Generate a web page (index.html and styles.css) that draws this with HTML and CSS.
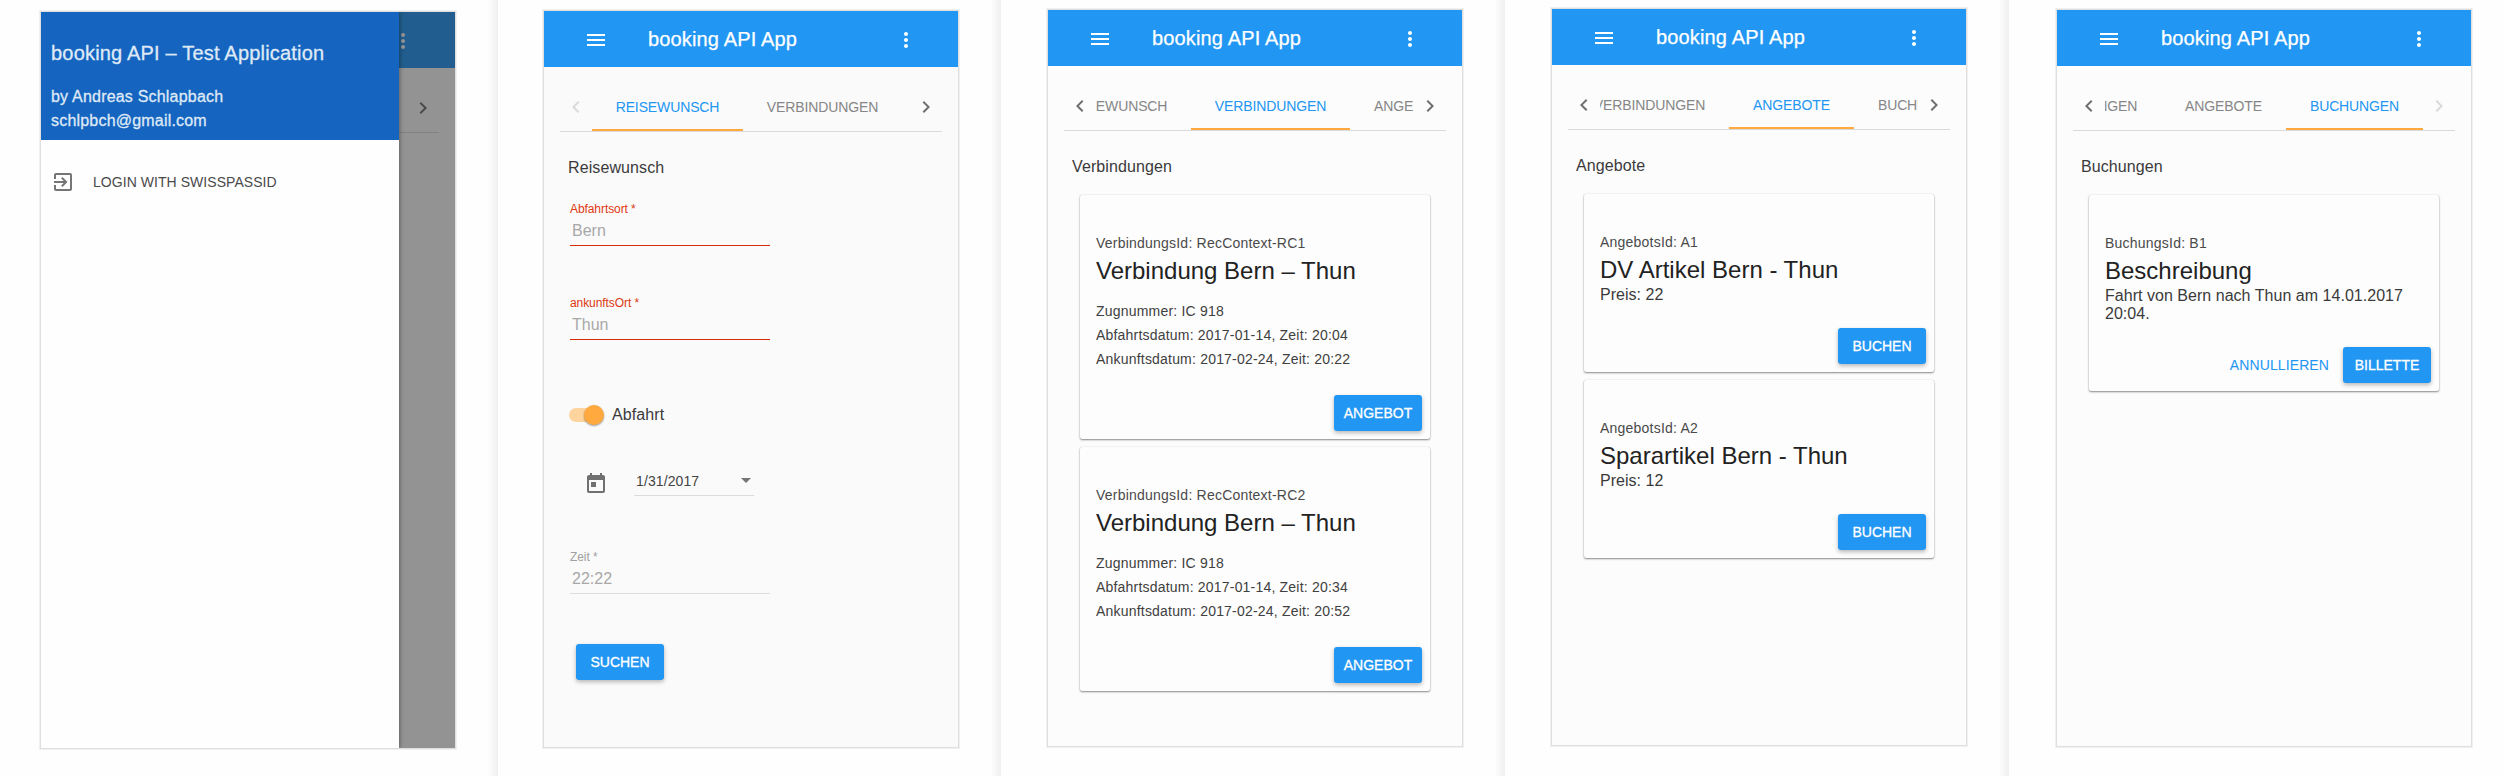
FILE: index.html
```
<!DOCTYPE html>
<html lang="de">
<head>
<meta charset="utf-8">
<title>booking API App</title>
<link rel="stylesheet" href="styles.css">
</head>
<body>
<svg class="defs" width="0" height="0" aria-hidden="true">
  <symbol id="menu" viewBox="0 0 24 24"><path d="M3 18h18v-2H3v2zm0-5h18v-2H3v2zm0-7v2h18V6H3z"/></symbol>
  <symbol id="more" viewBox="0 0 24 24"><path d="M12 8c1.1 0 2-.9 2-2s-.9-2-2-2-2 .9-2 2 .9 2 2 2zm0 2c-1.1 0-2 .9-2 2s.9 2 2 2 2-.9 2-2-.9-2-2-2zm0 6c-1.1 0-2 .9-2 2s.9 2 2 2 2-.9 2-2-.9-2-2-2z"/></symbol>
  <symbol id="prev" viewBox="0 0 24 24"><path d="M15.41 7.41L14 6l-6 6 6 6 1.41-1.41L10.83 12z"/></symbol>
  <symbol id="next" viewBox="0 0 24 24"><path d="M10 6L8.59 7.41 13.17 12l-4.58 4.59L10 18l6-6z"/></symbol>
  <symbol id="today" viewBox="0 0 24 24"><path d="M19 3h-1V1h-2v2H8V1H6v2H5c-1.11 0-1.99.9-1.99 2L3 19c0 1.1.89 2 2 2h14c1.1 0 2-.9 2-2V5c0-1.100-.9-2-2-2zm0 16H5V8h14v11zM7 10h5v5H7z"/></symbol>
  <symbol id="login" viewBox="0 0 24 24"><path d="M10.090 15.590L11.500 17l5-5-5-5-1.410 1.410L12.670 11H3v2h9.670l-2.580 2.590zM19 3H5c-1.110 0-2 .9-2 2v4h2V5h14v14H5v-4H3v4c0 1.100.890 2 2 2h14c1.100 0 2-.9 2-2V5c0-1.100-.9-2-2-2z"/></symbol>
</svg>
<main class="board">

  <section class="panel p1">
    <div class="phone">
      <header class="toolbar">
        <h1></h1>
        <svg class="icon"><use href="#more"/></svg>
      </header>
      <nav class="tabs">
        <div class="canvas"></div>
        <span class="arrow"><svg class="icon"><use href="#next"/></svg></span>
      </nav>
      <div class="backdrop"></div>
      <aside class="drawer">
        <div class="drawer-head">
          <h2>booking API – Test Application</h2>
          <p>by Andreas Schlapbach</p>
          <p>schlpbch@gmail.com</p>
        </div>
        <a class="login"><svg class="icon"><use href="#login"/></svg><span>LOGIN WITH SWISSPASSID</span></a>
      </aside>
    </div>
  </section>

  <section class="panel p2">
    <div class="phone">
      <header class="toolbar">
        <svg class="icon"><use href="#menu"/></svg>
        <h1>booking API App</h1>
        <svg class="icon"><use href="#more"/></svg>
      </header>
      <nav class="tabs">
        <span class="arrow off"><svg class="icon"><use href="#prev"/></svg></span>
        <div class="canvas"><div class="strip">
          <span class="tab t1 active">REISEWUNSCH</span><span class="tab t2">VERBINDUNGEN</span>
        </div></div>
        <span class="arrow"><svg class="icon"><use href="#next"/></svg></span>
      </nav>
      <h2 class="heading">Reisewunsch</h2>
      <form class="form">
        <label class="field invalid"><span>Abfahrtsort *</span><b>Bern</b></label>
        <label class="field invalid"><span>ankunftsOrt *</span><b>Thun</b></label>
        <div class="switch"><i class="track"><i class="thumb"></i></i><span>Abfahrt</span></div>
        <div class="date"><svg class="icon"><use href="#today"/></svg><div class="date-input"><span>1/31/2017</span><i class="caret"></i></div></div>
        <label class="field time"><span>Zeit *</span><b>22:22</b></label>
        <span class="btn">SUCHEN</span>
      </form>
    </div>
  </section>

  <section class="panel p3">
    <div class="phone">
      <header class="toolbar">
        <svg class="icon"><use href="#menu"/></svg>
        <h1>booking API App</h1>
        <svg class="icon"><use href="#more"/></svg>
      </header>
      <nav class="tabs">
        <span class="arrow"><svg class="icon"><use href="#prev"/></svg></span>
        <div class="canvas"><div class="strip">
          <span class="tab t1">REISEWUNSCH</span><span class="tab t2 active">VERBINDUNGEN</span><span class="tab t3">ANGEBOTE</span>
        </div></div>
        <span class="arrow"><svg class="icon"><use href="#next"/></svg></span>
      </nav>
      <h2 class="heading">Verbindungen</h2>
      <div class="cards">
        <article class="card">
          <p class="sub">VerbindungsId: RecContext-RC1</p>
          <h3>Verbindung Bern – Thun</h3>
          <div class="details"><p>Zugnummer: IC 918</p><p>Abfahrtsdatum: 2017-01-14, Zeit: 20:04</p><p>Ankunftsdatum: 2017-02-24, Zeit: 20:22</p></div>
          <div class="actions"><span class="btn">ANGEBOT</span></div>
        </article>
        <article class="card">
          <p class="sub">VerbindungsId: RecContext-RC2</p>
          <h3>Verbindung Bern – Thun</h3>
          <div class="details"><p>Zugnummer: IC 918</p><p>Abfahrtsdatum: 2017-01-14, Zeit: 20:34</p><p>Ankunftsdatum: 2017-02-24, Zeit: 20:52</p></div>
          <div class="actions"><span class="btn">ANGEBOT</span></div>
        </article>
      </div>
    </div>
  </section>

  <section class="panel p4">
    <div class="phone">
      <header class="toolbar">
        <svg class="icon"><use href="#menu"/></svg>
        <h1>booking API App</h1>
        <svg class="icon"><use href="#more"/></svg>
      </header>
      <nav class="tabs">
        <span class="arrow"><svg class="icon"><use href="#prev"/></svg></span>
        <div class="canvas"><div class="strip">
          <span class="tab t2">VERBINDUNGEN</span><span class="tab t3 active">ANGEBOTE</span><span class="tab t4">BUCHUNGEN</span>
        </div></div>
        <span class="arrow"><svg class="icon"><use href="#next"/></svg></span>
      </nav>
      <h2 class="heading">Angebote</h2>
      <div class="cards">
        <article class="card">
          <p class="sub">AngebotsId: A1</p>
          <h3>DV Artikel Bern - Thun</h3>
          <p class="text">Preis: 22</p>
          <div class="actions"><span class="btn">BUCHEN</span></div>
        </article>
        <article class="card">
          <p class="sub">AngebotsId: A2</p>
          <h3>Sparartikel Bern - Thun</h3>
          <p class="text">Preis: 12</p>
          <div class="actions"><span class="btn">BUCHEN</span></div>
        </article>
      </div>
    </div>
  </section>

  <section class="panel p5">
    <div class="phone">
      <header class="toolbar">
        <svg class="icon"><use href="#menu"/></svg>
        <h1>booking API App</h1>
        <svg class="icon"><use href="#more"/></svg>
      </header>
      <nav class="tabs">
        <span class="arrow"><svg class="icon"><use href="#prev"/></svg></span>
        <div class="canvas"><div class="strip">
          <span class="tab t2">VERBINDUNGEN</span><span class="tab t3">ANGEBOTE</span><span class="tab t4 active">BUCHUNGEN</span>
        </div></div>
        <span class="arrow off"><svg class="icon"><use href="#next"/></svg></span>
      </nav>
      <h2 class="heading">Buchungen</h2>
      <div class="cards">
        <article class="card">
          <p class="sub">BuchungsId: B1</p>
          <h3>Beschreibung</h3>
          <p class="text">Fahrt von Bern nach Thun am 14.01.2017 20:04.</p>
          <div class="actions"><span class="btn flat">ANNULLIEREN</span><span class="btn">BILLETTE</span></div>
        </article>
      </div>
    </div>
  </section>

</main>
</body>
</html>
```
FILE: styles.css
```
* { box-sizing: border-box; margin: 0; padding: 0; }
body {
  width: 2504px; height: 776px; overflow: hidden; background: #fefefe;
  font: 16px/24px "Liberation Sans", Arial, sans-serif; color: rgba(0, 0, 0, .87);
}
h1, h2, h3, b { font-weight: 400; }
.defs { display: block; }
.icon { width: 24px; height: 24px; flex: none; fill: currentColor; display: block; }

.board { display: flex; height: 776px; }
.panel { flex: none; height: 776px; }
.p1 { width: 498px; padding: 12px 0 0 41px; }
.p2 { width: 503px; padding: 11px 0 0 46px; }
.p3 { width: 504px; padding: 10px 0 0 47px; }
.p4 { width: 504px; padding: 9px 0 0 47px; }
.p5 { width: 495px; padding: 10px 0 0 48px; }
.p1, .p2, .p3, .p4 {
  background: linear-gradient(to right, rgba(240, 240, 240, 0), #efefef) right / 10px 100% no-repeat;
}

.phone {
  position: relative; width: 414px; height: 736px; background: #fcfcfc;
  box-shadow: 0 0 0 1px #dfdfdf, 0 0 0 2px #f0f0f0;
}
.p2 .phone { background: #fafafa; }
.toolbar {
  display: flex; align-items: center; height: 56px; padding: 2px 40px 0;
  background: #2196f3; color: #fff;
}
.toolbar h1 {
  flex: 1; margin-bottom: 2px; padding-left: 40px; font-size: 20px; letter-spacing: .15px;
  -webkit-text-stroke: .25px currentColor;
}

.tabs { display: flex; height: 49px; margin: 16px 16px 0; border-bottom: 1px solid #dadada; }
.arrow { flex: none; display: flex; width: 32px; align-items: center; justify-content: center; color: #6f6f6f; }
.arrow.off { color: #dadada; }
.canvas { flex: 1; min-width: 0; overflow: hidden; }
.strip { display: flex; }
.p3 .strip { margin-left: -56px; }
.p4 .strip { margin-left: -30px; }
.p5 .strip { margin-left: -103px; }
.tab {
  flex: none; height: 48px; text-align: center; font-size: 14px; line-height: 48px;
  letter-spacing: -.12px; color: #868686; white-space: nowrap;
}
.tab.active { color: #2196f3; box-shadow: inset 0 -2px #ffa93f; }
.t1 { width: 151px; }
.t2 { width: 159px; }
.t3 { width: 125px; }
.t4 { width: 137px; }

.heading { height: 24px; margin: 24px 0 0 24px; font-size: 16px; line-height: 24px; letter-spacing: .1px; color: #3a3a3a; }

.form { display: flex; flex-direction: column; align-items: flex-start; padding: 20px 0 0 26px; }
.field {
  display: flex; flex-direction: column; width: 200px; height: 46px; margin-bottom: 48px;
  border-bottom: 1px solid #dcdcdc; color: #a0a0a0; white-space: nowrap;
}
.field span { height: 20px; font-size: 12px; line-height: 18px; letter-spacing: -.08px; }
.field b { height: 25px; padding-left: 2px; font-size: 16px; line-height: 22px; color: #a8a8a8; }
.invalid { border-color: #d62d05; }
.invalid span { color: #dd3812; }
.switch { display: flex; align-items: center; height: 24px; margin: 15px 0 0 -1px; }
.track { width: 34px; height: 14px; border-radius: 7px; background: #fdd39e; }
.thumb {
  display: block; width: 20px; height: 20px; margin: -3px 0 0 15px; border-radius: 50%;
  background: #ffa93f; box-shadow: 0 1px 2px rgba(0, 0, 0, .4);
}
.switch span { padding-left: 9px; color: #3a3a3a; letter-spacing: .1px; }
.date { display: flex; align-items: flex-start; margin: 45px 0 0 14px; color: #707070; }
.date-input {
  display: flex; align-items: center; justify-content: space-between; width: 120px; height: 29px;
  margin: -5px 0 0 26px; padding: 0 3px 0 2px; border-bottom: 1px solid #dcdcdc;
  font-size: 14px; line-height: 28px; letter-spacing: .1px; color: #444;
}
.caret { margin-bottom: 2px; border: 5px solid transparent; border-top-color: #757575; border-bottom: 0; }
.time { margin-top: 52px; margin-bottom: 0; }
.btn {
  display: block; min-width: 88px; height: 36px; padding: 0 6px; border-radius: 3px; text-align: center;
  font-size: 14px; line-height: 36px; background: #2196f3; color: #fff;
  -webkit-text-stroke: .3px currentColor; box-shadow: 0 2px 4px rgba(0, 0, 0, .28);
}
.form .btn { margin: 50px 0 0 6px; }
.btn.flat { background: none; box-shadow: none; color: #2196f3; letter-spacing: .1px; -webkit-text-stroke: 0; }

.cards { display: flex; flex-direction: column; gap: 8px; padding: 16px 32px 0; }
.card {
  display: flex; flex-direction: column; padding: 39px 8px 8px 16px; border-radius: 2px;
  background: #fdfdfd; box-shadow: 0 1px 2px rgba(0, 0, 0, .45), 0 0 1px rgba(0, 0, 0, .2);
}
.sub { height: 18px; font-size: 14px; line-height: 18px; letter-spacing: .22px; color: #4a4a4a; }
.card h3 { height: 35px; font-size: 24px; line-height: 37px; color: #222; white-space: nowrap; }
.details { padding-top: 12px; font-size: 14px; letter-spacing: .2px; color: #404040; }
.text { padding-right: 8px; line-height: 18px; color: #3a3a3a; letter-spacing: .03px; }
.actions { display: flex; justify-content: flex-end; gap: 8px; margin-top: 24px; }

.backdrop { position: absolute; inset: 0; background: rgba(33, 33, 33, .48); }
.drawer {
  position: absolute; inset: 0 auto 0 0; width: 358px; background: #fefefe;
  box-shadow: 1px 0 4px rgba(0, 0, 0, .35);
  clip-path: inset(0 -6px 0 0);
}
.drawer-head {
  height: 128px; padding: 29px 0 0 10px; background: #1564c0; color: #dfe9f6; letter-spacing: .2px;
  -webkit-text-stroke: .3px currentColor;
}
.drawer-head h2 { height: 44px; font-size: 20px; line-height: 24px; letter-spacing: .19px; }
.login { display: flex; align-items: center; padding: 30px 0 0 10px; font-size: 14px; color: #757575; }
.login span { padding-left: 18px; letter-spacing: .05px; color: #4a4a4a; }
```
